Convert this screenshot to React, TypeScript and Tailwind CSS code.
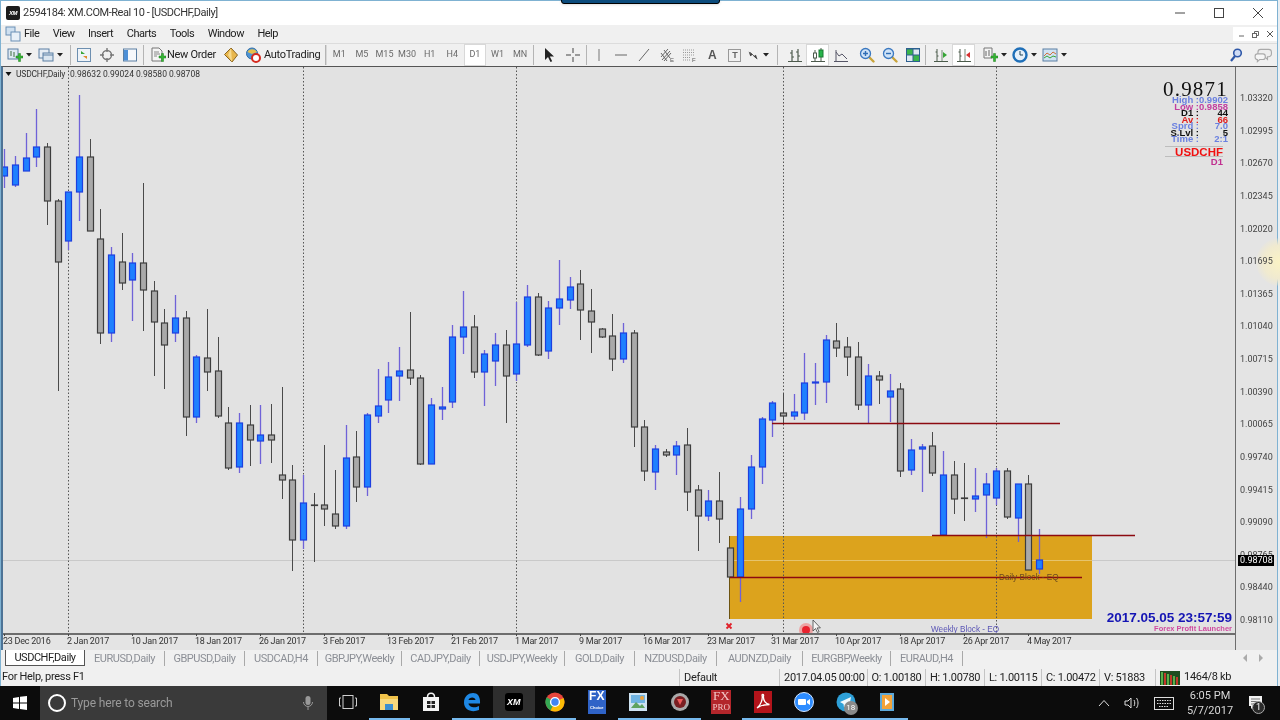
// MT4 chart window
import type { ReactNode } from "react";

type Candle = [string, number, number, number, number];

// type, body top, body bottom, wick top, wick bottom
const candles: Candle[] = [
  ["u",167,176,149,188],["u",165,185,156,187],["u",158,171,133,171],["u",147,157,109,167],["d",147,201,143,225],
  ["d",201,262,199,391],["u",192,241,192,250],["u",157,192,95,221],["d",157,231,139,231],["d",239,333,209,344],
  ["u",255,333,247,342],["d",262,283,233,290],["u",263,280,253,321],["d",263,290,183,331],["d",291,322,281,376],
  ["d",323,345,309,389],["u",318,333,295,342],["d",318,417,311,436],["u",357,417,355,423],["d",358,372,309,391],
  ["d",371,416,337,418],["d",423,468,407,470],["u",423,467,413,473],["d",425,440,405,466],["u",435,441,405,464],
  ["d",435,440,404,463],["d",475,480,387,499],["d",480,540,465,571],["u",503,540,475,549],["d",505,505.5,493,562],
  ["d",505,509,445,526],["d",514,526,470,529],["u",458,526,425,529],["d",457,487,431,502],["u",415,487,413,496],
  ["u",406,416,369,423],["u",377,400,362,413],["u",371,376,347,401],["d",370,378,312,385],["d",378,464,375,465],
  ["u",405,464,398,464],["u",407,409,387,420],["u",337,402,325,408],["u",327,337,291,354],["d",327,372,315,378],
  ["u",354,372,350,406],["u",345,361,333,386],["d",345,376,330,423],["u",344,374,302,381],["u",297,345,285,347],
  ["d",297,355,293,356],["u",308,351,301,359],["u",299,308,260,325],["u",287,300,277,309],["d",284,310,270,340],
  ["d",311,322,289,353],["d",329,337,328,338],["d",336,359,314,371],["u",333,359,323,363],["d",333,427,330,447],
  ["d",427,471,420,481],["u",449,472,445,490],["d",452,455,449,457],["u",446,455,441,475],["d",445,492,428,511],
  ["d",490,516,485,551],["u",501,516,490,521],["d",501,519,472,543],["d",548,577,548,577],["u",509,577,497,602],
  ["u",467,509,455,519],["u",419,467,417,484],["u",403,420,401,437],["d",413,416,393,425],["u",412,416,394,420],
  ["u",383,413,353,420],["u",382,383,363,405],["u",340,382,335,403],["d",341,348,323,357],["d",347,357,337,376],
  ["d",357,405,342,410],["u",376,405,364,423],["d",376,380,371,404],["u",391,397,374,422],["d",389,471,383,477],
  ["u",450,470,439,475],["u",447,449,444,492],["d",446,473,432,476],["u",475,535,451,535],["d",475,499,461,514],
  ["d",498,498.5,463,521],["u",496,499,468,512],["u",484,495,473,538],["u",471,498,468,505],["d",471,517,468,519],
  ["u",484,518,484,542],["d",484,570,475,570],["u",560,569,529,574],
];

const dates = ["23 Dec 2016","2 Jan 2017","10 Jan 2017","18 Jan 2017","26 Jan 2017","3 Feb 2017","13 Feb 2017","21 Feb 2017","1 Mar 2017","9 Mar 2017","16 Mar 2017","23 Mar 2017","31 Mar 2017","10 Apr 2017","18 Apr 2017","26 Apr 2017","4 May 2017"];
const prices = ["1.03320","1.02995","1.02670","1.02345","1.02020","1.01695","1.01365","1.01040","1.00715","1.00390","1.00065","0.99740","0.99415","0.99090","0.98765","0.98440","0.98110"];
const tabs = [
  ["EURUSD,Daily", "w-[80px]"],
  ["GBPUSD,Daily", "w-[80px]"],
  ["USDCAD,H4", "w-[73px]"],
  ["GBPJPY,Weekly", "w-[84px]"],
  ["CADJPY,Daily", "w-[78px]"],
  ["USDJPY,Weekly", "w-[85px]"],
  ["GOLD,Daily", "w-[70px]"],
  ["NZDUSD,Daily", "w-[82px]"],
  ["AUDNZD,Daily", "w-[86px]"],
  ["EURGBP,Weekly", "w-[88px]"],
  ["EURAUD,H4", "w-[72px]"],
];

const info = [
  ["High :", "0.9902", "#6a80e0", 103],
  ["Low :", "0.9858", "#c23fa0", 110],
  ["D1 :", "44", "#111111", 116],
  ["Av :", "66", "#e02020", 123],
  ["Sprd :", "7.0", "#6a80e0", 129],
  ["S.Lvl :", "5", "#111111", 136],
  ["Time :", "2:1", "#6a80e0", 142],
] as const;

const Ico = ({ children, s = 16 }: { children: ReactNode; s?: number }) => (
  <svg width={s} height={s} viewBox="0 0 16 16" className="shrink-0">{children}</svg>
);

const Caret = () => <svg width="6" height="4" viewBox="0 0 6 4" className="ml-[3px] shrink-0"><path d="M0 0h6L3 3.5z" fill="#222" /></svg>;

const Plus = () => <path d="M9 9h2.5V6.5h2V9H16v2h-2.5v3.5h-2V11H9z" fill="#35b534" stroke="#1d7d1d" strokeWidth=".5" />;

const Tb = ({ w, on, children, className = "" }: { w: string; on?: boolean; children: ReactNode; className?: string }) => (
  <div className={`${w} h-[22px] flex items-center justify-center shrink-0 ${on ? "bg-white border border-[#d8d8d8]" : ""} ${className}`}>{children}</div>
);

const Sep = ({ className = "" }: { className?: string }) => <div className={`w-[1px] h-[20px] bg-[#b4b4b4] shrink-0 ${className}`} />;

const Mag = ({ sign }: { sign: string }) => (
  <Ico>
    <path d="M10 10l4.5 4.5" stroke="#c9a43a" strokeWidth="2.4" strokeLinecap="round" />
    <circle cx="6.5" cy="6.5" r="5" fill="#cfe3f7" stroke="#3a78c0" strokeWidth="1.3" />
    <path d={sign} stroke="#2f6db5" strokeWidth="1.4" />
  </Ico>
);

const Bars = ({ mark }: { mark: ReactNode }) => (
  <Ico>
    <path d="M1 14.5h14M4 2v12M2.5 5H4M4 9h1.5" stroke="#4a5a4a" strokeWidth="1" fill="none" />
    {mark}
  </Ico>
);

function Toolbar() {
  return (
    <div className="h-[23px] shrink-0 bg-[#f0f0f0] border-t border-[#dcdcdc] flex items-center pl-[3px] pr-[3px] text-[11px] tracking-[-0.3px] text-[#222]">
      <Tb w="w-[30px]">
        <Ico><rect x="1" y="2" width="10" height="10" fill="#dfe9f2" stroke="#5b7fa3" /><path d="M4 4v5M7 5v5" stroke="#3f6f3f" /><Plus /></Ico><Caret />
      </Tb>
      <Tb w="w-[32px]">
        <Ico><rect x="1" y="2" width="10" height="9" fill="#e6edf4" stroke="#5b7fa3" /><rect x="5" y="6" width="10" height="8" fill="#dbe6f0" stroke="#5b7fa3" /><path d="M5 8h10" stroke="#5b7fa3" /></Ico><Caret />
      </Tb>
      <Sep className="ml-[4px] mr-[1px]" />
      <Tb w="w-[23px]">
        <Ico><rect x="1.5" y="1.5" width="13" height="13" fill="#eef3f8" stroke="#6d8fb0" /><path d="M5 4l4 3H5z" fill="#39a639" /><path d="M11 12L7 9h4z" fill="#e08a2a" /></Ico>
      </Tb>
      <Tb w="w-[23px]">
        <Ico><circle cx="8" cy="8" r="4.5" fill="none" stroke="#777" strokeWidth="1.4" /><path d="M8 1v4M8 11v4M1 8h4M11 8h4" stroke="#777" strokeWidth="1.4" /></Ico>
      </Tb>
      <Tb w="w-[23px]">
        <Ico><rect x="1.5" y="2" width="13" height="12" fill="#f6f8fb" stroke="#5b7fa3" /><rect x="2" y="3" width="4" height="10.5" fill="#4d8fd6" /></Ico>
      </Tb>
      <Sep className="ml-[2px]" />
      <div className="w-[76px] pl-[6px] flex items-center shrink-0 gap-[1px] whitespace-nowrap">
        <Ico><path d="M2 1h7l3 3v10H2z" fill="#f5f5f5" stroke="#777" /><path d="M4 5h5M4 7h6M4 9h3" stroke="#888" /><Plus /></Ico>
        <span>New Order</span>
      </div>
      <Tb w="w-[21px]">
        <Ico><path d="M8 1l6.5 7L9 15 1.5 7.5z" fill="#e8b64c" stroke="#8a6420" /><path d="M8 1L5 8l4 7" fill="#f6d98d" stroke="none" /></Ico>
      </Tb>
      <div className="w-[78px] ml-[2px] pl-[2px] flex items-center gap-[3px] shrink-0 whitespace-nowrap">
        <Ico>
          <circle cx="7" cy="6.5" r="5.5" fill="#4f94d4" stroke="#2f6da8" />
          <path d="M2.5 5C4 2 9 1 12 5L7 7z" fill="#e6c04a" />
          <circle cx="11" cy="11" r="4" fill="#fff" stroke="#d52a1e" strokeWidth="2" />
        </Ico>
        <span>AutoTrading</span>
      </div>
      <Sep className="ml-[4px]" />
      <div className="w-[1px] h-[20px] bg-[#d8d8d8] mr-[1px] shrink-0" />
      {["M1","M5","M15","M30","H1","H4","D1","W1","MN"].map((p) => (
        <Tb key={p} w="w-[22.6px]" on={p === "D1"} className="text-[9px] tracking-normal text-[#6a6a6a]">{p}</Tb>
      ))}
      <Sep className="ml-[2px] mr-[3px]" />
      <Tb w="w-[23px]">
        <Ico><path d="M4 1v12l3-3 2.5 5 1.7-.8L8.8 9.5H13z" fill="#222" /></Ico>
      </Tb>
      <Tb w="w-[23px]" className="ml-[1px]">
        <Ico><path d="M8 1v5M8 10v5M1 8h5M10 8h5" stroke="#444" /></Ico>
      </Tb>
      <Sep className="ml-[2px]" />
      <Tb w="w-[22.7px]"><Ico><path d="M8 2v12" stroke="#777" /></Ico></Tb>
      <Tb w="w-[22.7px]"><Ico><path d="M2 8h12" stroke="#666" /></Ico></Tb>
      <Tb w="w-[22.7px]"><Ico><path d="M3 14L13 2" stroke="#666" /></Ico></Tb>
      <Tb w="w-[22.7px]">
        <Ico><path d="M2 10l7-8M3 13l8-9M5 14l7-8M2 6l6 8M5 3l6 8" stroke="#666" /><text x="11" y="15" fontSize="6" fill="#555" fontFamily="Liberation Sans">E</text></Ico>
      </Tb>
      <Tb w="w-[22.7px]">
        <Ico><path d="M2 3h11M2 5.5h11M2 8h11M2 10.5h8M2 13h8" stroke="#999" strokeDasharray="1 1" /><text x="11" y="15" fontSize="6" fill="#555" fontFamily="Liberation Sans">F</text></Ico>
      </Tb>
      <Tb w="w-[22.7px]" className="font-bold text-[#555] font-['Liberation_Sans'] text-[12px]">A</Tb>
      <Tb w="w-[22.7px]">
        <div className="w-[13px] h-[13px] border border-[#999] flex items-center justify-center text-[9px] leading-none font-bold text-[#666] font-['Liberation_Sans']">T</div>
      </Tb>
      <Tb w="w-[24px]">
        <Ico s={13}><path d="M2 3l5 4-3 2zM13 13L8 9l3-2z" fill="#444" /><path d="M4 4l8 8" stroke="#444" /></Ico><Caret />
      </Tb>
      <Sep className="ml-[7px] mr-[5px]" />
      <Tb w="w-[23px]">
        <Ico><path d="M1 14.5h14M5 3v11M11 2v12M3 6h2M5 10h2M9 5h2M11 9h2" stroke="#4d5a4d" strokeWidth="1.2" fill="none" /></Ico>
      </Tb>
      <Tb w="w-[23px]" on>
        <Ico><path d="M1 14.5h14M5 3v11M11 1v13" stroke="#4d5a4d" /><rect x="3.5" y="6" width="3" height="5" fill="#fff" stroke="#4d5a4d" /><rect x="9" y="3" width="4" height="7" fill="#27b34a" stroke="#1a7a33" /></Ico>
      </Tb>
      <Tb w="w-[23px]">
        <Ico><path d="M1 14.5h14M3 14V3M3 5l3 4 3-2 5 5" stroke="#556" fill="none" /></Ico>
      </Tb>
      <div className="w-[3px] shrink-0" />
      <Tb w="w-[23px]"><Mag sign="M4 6.5h5M6.5 4v5" /></Tb>
      <Tb w="w-[23px]"><Mag sign="M4 6.5h5" /></Tb>
      <Tb w="w-[23px]">
        <Ico>
          <rect x="1" y="1" width="14" height="14" fill="#2c5f8f" />
          <rect x="2" y="2.5" width="5.5" height="5" fill="#39b54a" /><rect x="8.5" y="2.5" width="5.5" height="5" fill="#dfe9f2" />
          <rect x="2" y="8.5" width="5.5" height="5.5" fill="#dfe9f2" /><rect x="8.5" y="8.5" width="5.5" height="5.5" fill="#39b54a" />
        </Ico>
      </Tb>
      <Sep className="ml-[1px] mr-[3px]" />
      <Tb w="w-[23px]">
        <Bars mark={<><path d="M9 3v11" stroke="#7a8a7a" /><path d="M10 5l4 3-4 3z" fill="#35a535" /></>} />
      </Tb>
      <Tb w="w-[23px]" on>
        <Bars mark={<><path d="M9 2v12" stroke="#7a8a7a" /><path d="M14 5l-4 3 4 3z" fill="#d63030" /></>} />
      </Tb>
      <div className="w-[4px] shrink-0" />
      <Tb w="w-[30px]">
        <Ico><path d="M2 1h8v10H2z" fill="#f4f4f4" stroke="#777" /><path d="M4 4v5M7 3v6" stroke="#666" /><Plus /></Ico><Caret />
      </Tb>
      <Tb w="w-[30px]">
        <Ico><circle cx="8" cy="8" r="6.5" fill="#e6f0fa" stroke="#1f6fb8" strokeWidth="2.4" /><path d="M8 4v4h3" stroke="#245" fill="none" /></Ico><Caret />
      </Tb>
      <Tb w="w-[30px]">
        <Ico><rect x="1" y="2" width="14" height="12" fill="#cfe2f3" stroke="#5b7fa3" /><path d="M2 9l3-3 3 2 3-3 3 2" stroke="#d0703a" fill="none" /><path d="M2 11l3-2 3 2 3-2 3 1" stroke="#39a639" fill="none" /></Ico><Caret />
      </Tb>
      <div className="flex-1" />
      <Tb w="w-[23px]">
        <Ico><circle cx="9.5" cy="6" r="3.8" fill="#cfdcf5" stroke="#2f58a8" strokeWidth="1.6" /><path d="M7 9l-4 5" stroke="#2f58a8" strokeWidth="2.2" /></Ico>
      </Tb>
      <Tb w="w-[23px]" className="ml-[4px]">
        <Ico s={18}><path d="M6 3h7a2.5 2.5 0 012.5 2.5V7A2.5 2.5 0 0113 9.5h-1V12l-2.5-2.5H6A2.5 2.5 0 013.5 7V5.5A2.5 2.5 0 016 3z" fill="#eee" stroke="#aaa" /><path d="M3 7h5a2 2 0 012 2v1a2 2 0 01-2 2H5l-2 2v-2a2 2 0 01-2-2V9a2 2 0 012-2z" fill="#f6f6f6" stroke="#aaa" /></Ico>
      </Tb>
    </div>
  );
}

function Plot() {
  return (
    <svg width="1232" height="566" viewBox="3 67 1232 566" className="block bg-[#e2e2e2]">
      <line x1="3" y1="560.5" x2="1235" y2="560.5" stroke="#c9c9c9" />
      <rect x="729.5" y="536" width="362.5" height="83" fill="#dca31d" />
      <line x1="729.5" y1="536" x2="729.5" y2="619" stroke="#6d5310" />
      <line x1="729.5" y1="560.5" x2="1092" y2="560.5" stroke="#e6c46c" />
      {[68, 303, 516, 783, 996].map((x) => (
        <line key={x} x1={x + 0.5} y1="67" x2={x + 0.5} y2="633" stroke="#555" strokeDasharray="1.5 2" />
      ))}
      {candles.map(([t, top, bot, wt, wb], i) => {
        const x = Math.round(4.33 + 10.667 * i);
        const up = t === "u";
        return (
          <g key={i}>
            <line x1={x + 0.5} y1={wt} x2={x + 0.5} y2={wb} stroke={up ? "#6f62d8" : "#4a4a4a"} strokeWidth={up ? 1.3 : 1} />
            <rect x={x - 2.5} y={top} width="6" height={bot - top} fill={up ? "#1f80ff" : "#a9a9a9"} stroke={up ? "#1d3fe0" : "#3d3d3d"} strokeWidth="1.2" />
          </g>
        );
      })}
      <line x1="772" y1="423.5" x2="1060" y2="423.5" stroke="#8c0a10" strokeWidth="1.4" />
      <line x1="932" y1="535.5" x2="1135" y2="535.5" stroke="#8c0a10" strokeWidth="1.4" />
      <line x1="730" y1="577.5" x2="1082" y2="577.5" stroke="#8c0a10" strokeWidth="1.4" />
      <path d="M726.5 623.5l5 5M731.5 623.5l-5 5" stroke="#e0202a" strokeWidth="1.8" />
      <g fontFamily="Liberation Sans, sans-serif">
        <text x="999" y="580" fontSize="8.2" fill="#6a4a20">Daily Block - EQ</text>
        <text x="931" y="632" fontSize="8.2" fill="#5a55b5">Weekly Block - EQ</text>
        <text x="1232" y="622" textAnchor="end" fontSize="13.5" fontWeight="700" fill="#1414b4">2017.05.05 23:57:59</text>
        <text x="1232" y="631" textAnchor="end" fontSize="7.5" fontWeight="700" fill="#d04aa0">Forex Profit Launcher</text>
        <text x="1163" y="96" fontSize="21" letterSpacing="1.2" fill="#111" fontFamily="Liberation Serif, serif">0.9871</text>
        {info.map(([label, val, col, y]) => (
          <g key={label} fontSize="9.5" fontWeight="700" fill={col}>
            <text x="1199" y={y} textAnchor="end">{label}</text>
            <text x="1228" y={y} textAnchor="end">{val}</text>
          </g>
        ))}
        <line x1="1165" y1="146.5" x2="1223" y2="146.5" stroke="#bdbdbd" />
        <line x1="1165" y1="156.5" x2="1223" y2="156.5" stroke="#bdbdbd" />
        <text x="1223" y="156" textAnchor="end" fontSize="11.5" fontWeight="700" fill="#f01010">USDCHF</text>
        <text x="1223" y="165" textAnchor="end" fontSize="9.5" fontWeight="700" fill="#c02f8f">D1</text>
      </g>
      <path d="M5.5 72h6l-3 4z" fill="#111" />
      <text x="16" y="77" fontSize="8.5" letterSpacing="-.2" fill="#333" fontFamily="Roboto, sans-serif">USDCHF,Daily</text>
      <text x="70" y="77" fontSize="8.5" fill="#333" fontFamily="Roboto, sans-serif">0.98632 0.99024 0.98580 0.98708</text>
      <circle cx="806" cy="630" r="7" fill="#f28a8a" opacity=".7" />
      <circle cx="806" cy="630" r="4" fill="#e8222e" />
      <path d="M813 620v11l2.5-2.5 2 4 1.6-.8-2-3.8h3.3z" fill="#f4f4f4" stroke="#444" strokeWidth=".8" />
    </svg>
  );
}

const Taskbar = ({ on, bg, children }: { on?: boolean; bg?: boolean; children: ReactNode }) => (
  <div className={`w-[41.5px] h-full flex items-center justify-center shrink-0 border-b-2 ${on ? "border-[#76b9ed]" : "border-transparent"} ${bg ? "bg-[#2e2e2e]" : ""}`}>{children}</div>
);

export default function App() {
  return (
    <div className="relative w-[1280px] h-[720px] overflow-hidden flex flex-col bg-white font-['Roboto',sans-serif] text-[#222] blur-[0.35px]">
      <div className="absolute left-[561px] top-[-3px] w-[159px] h-[7px] bg-[#0b4b7c] border border-black rounded-b-[3px] shadow" />
      <div className="absolute right-0 top-[238px] w-[24px] h-[48px] rounded-l-full bg-[radial-gradient(circle_at_right,#fbf3c4,#f0ead0_50%,transparent_75%)]" />

      <div className="h-[686px] shrink-0 pr-[2px] bg-[#e9eef2]">
        <div className="h-full flex flex-col border-l border-r border-t border-b border-[#7fb2d2]">
          {/* title */}
          <div className="h-[24px] shrink-0 bg-white flex items-center pl-[5px] text-[11px] tracking-[-0.45px]">
            <div className="w-[14px] h-[14px] bg-[#1c1c1c] rounded-[2px] text-[6px] leading-[14px] text-center font-bold italic text-white font-['Liberation_Sans'] shrink-0">XM</div>
            <span className="ml-[3px] text-[#333]">2594184: XM.COM-Real 10 - [USDCHF,Daily]</span>
            <div className="ml-auto flex items-center">
              <div className="w-[39px] flex justify-center"><svg width="10" height="10" viewBox="0 0 10 10"><path d="M0 5h10" stroke="#444" /></svg></div>
              <div className="w-[39px] flex justify-center"><svg width="10" height="10" viewBox="0 0 10 10"><rect x=".5" y=".5" width="9" height="9" fill="none" stroke="#444" /></svg></div>
              <div className="w-[39px] flex justify-center"><svg width="10" height="10" viewBox="0 0 10 10"><path d="M0 0l10 10M10 0L0 10" stroke="#444" /></svg></div>
            </div>
          </div>

          {/* menu */}
          <div className="h-[18px] shrink-0 bg-[#f0f0f0] flex items-center pl-[4px] text-[11px] tracking-[-0.5px]">
            <Ico>
              <rect x="1" y="1" width="9" height="8" fill="#cfe0f0" stroke="#6a8fb5" />
              <rect x="6" y="6" width="9" height="9" fill="#e8f0f8" stroke="#6a8fb5" />
            </Ico>
            <div className="flex gap-[13.5px] ml-[3px]">
              {["File", "View", "Insert", "Charts", "Tools", "Window", "Help"].map((m) => <span key={m}>{m}</span>)}
            </div>
            <div className="ml-auto h-[14px] w-[44px] bg-white flex items-center justify-around text-[#666] pl-[2px]">
              <svg width="6" height="6" viewBox="0 0 6 6"><path d="M0 5h5" stroke="#666" /></svg>
              <svg width="7" height="7" viewBox="0 0 7 7" fill="none" stroke="#666"><rect x=".5" y="2.5" width="4" height="4" /><path d="M2.5 2.5V.5h4v4H4.5" /></svg>
              <svg width="6" height="6" viewBox="0 0 6 6"><path d="M0 0l6 6M6 0L0 6" stroke="#555" /></svg>
            </div>
          </div>

          <Toolbar />

          {/* chart */}
          <div className="h-[584px] shrink-0 flex bg-[#e4e4e4] border-t border-[#555] border-l-[2px] border-l-[#4d7396]">
            <div className="w-[1232px] shrink-0 flex flex-col">
              <div className="border-r border-b-2 border-[#6d6d6d] w-[1233px]"><Plot /></div>
              <div className="flex text-[9px] leading-[9px] tracking-[-0.25px] text-[#333] mt-[-1px]">
                {dates.map((d) => (
                  <div key={d} className="w-[64px] shrink-0 whitespace-nowrap">
                    <div className="w-[1px] h-[2px] bg-[#444] ml-[1px]" />
                    <div className="mt-[1px]">{d}</div>
                  </div>
                ))}
              </div>
            </div>
            <div className="relative flex-1 pt-[15px] pl-[4px] text-[9px] text-[#444] border-l border-[#6d6d6d]">
              {prices.map((p) => <div key={p} className="h-[32.64px] leading-[32px]">{p}</div>)}
              <div className="absolute left-[2px] top-[488px] w-[36px] h-[11px] bg-black text-white leading-[11px] pl-[2px]">0.98708</div>
            </div>
          </div>

          {/* tabs */}
          <div className="h-[18px] shrink-0 bg-[#f0f0f0] flex items-start pl-[4px] text-[11px] tracking-[-0.45px] text-[#8c8f96]">
            <div className="w-[80px] h-[16px] bg-white border border-[#555] border-t-0 text-[#222] text-center leading-[15px]">USDCHF,Daily</div>
            {tabs.map(([t, w]) => (
              <div key={t} className={`${w} shrink-0 h-[15px] mt-[1px] leading-[15px] text-center border-r border-[#a9a9a9] whitespace-nowrap`}>{t}</div>
            ))}
            <div className="ml-auto mr-[14px] mt-[4px] flex gap-[10px]">
              <svg width="5" height="8" viewBox="0 0 5 8"><path d="M4 0L0 4l4 4z" fill="#aaa" /></svg>
              <svg width="5" height="8" viewBox="0 0 5 8"><path d="M1 0l4 4-4 4z" fill="#aaa" /></svg>
            </div>
          </div>

          {/* status */}
          <div className="flex-1 bg-[#f0f0f0] flex items-center pl-[1px] pt-[1px] text-[11px] tracking-[-0.3px]">
            <div className="w-[677px] shrink-0">For Help, press F1</div>
            {[["w-[100px]","Default"],["w-[87.5px]","2017.04.05 00:00"],["w-[58.5px]","O: 1.00180"],["w-[59px]","H: 1.00780"],["w-[57px]","L: 1.00115"],["w-[58px]","C: 1.00472"],["w-[56px]","V: 51883"]].map(([w, t]) => (
              <div key={t} className={`${w} h-[17px] leading-[17px] pl-[4px] border-l border-[#c4c4c4] shrink-0 whitespace-nowrap`}>{t}</div>
            ))}
            <div className="h-[17px] pl-[4px] flex items-center gap-[4px] border-l border-[#c4c4c4] whitespace-nowrap">
              <svg width="20" height="14" viewBox="0 0 20 14">
                <rect width="20" height="14" fill="#1f4d1f" />
                {[1, 4, 7, 10, 13, 16].map((x, i) => <rect key={x} x={x} y={1 + i} width="2" height={13 - i} fill={i % 2 ? "#c23a2a" : "#58b04a"} />)}
              </svg>
              <span>1464/8 kb</span>
            </div>
          </div>
        </div>
      </div>

      {/* windows taskbar */}
      <div className="flex-1 bg-[#0c0c0c] flex items-center text-[#d8d8d8]">
        <div className="w-[40px] flex justify-center">
          <svg width="14" height="14" viewBox="0 0 14 14"><path d="M0 2l6-1v5.5H0zM7 .8L14 0v6.5H7zM0 7.5h6V13l-6-1zM7 7.5h7V14l-7-1z" fill="#fff" /></svg>
        </div>
        <div className="w-[287px] h-full bg-[#3a3a3a] flex items-center pl-[8px] text-[#9a9a9a] text-[12px] tracking-[-0.15px]">
          <div className="w-[18px] h-[18px] rounded-full border-[2px] border-white shrink-0" />
          <span className="ml-[5px]">Type here to search</span>
          <svg width="12" height="16" viewBox="0 0 12 16" className="ml-auto mr-[13px]"><rect x="3.5" y="1" width="5" height="9" rx="2.5" fill="#999" /><path d="M1.5 7a4.5 4.5 0 009 0M6 12v3" stroke="#999" fill="none" /></svg>
        </div>
        <Taskbar>
          <svg width="18" height="14" viewBox="0 0 18 14" fill="none" stroke="#cfcfcf"><rect x="4" y=".5" width="10" height="13" /><path d="M2 3H.5v8H2M16 3h1.5v8H16" /></svg>
        </Taskbar>
        <Taskbar on>
          <svg width="20" height="18" viewBox="0 0 20 18"><path d="M1 1h7l2 2h9v14H1z" fill="#f0c24a" /><rect x="1" y="6" width="18" height="11" fill="#f8d97c" /><rect x="6" y="11" width="8" height="6" fill="#3c8fd0" /></svg>
        </Taskbar>
        <Taskbar>
          <svg width="18" height="20" viewBox="0 0 18 20"><path d="M1 5h16v14H1z" fill="#f4f4f4" /><path d="M5.5 5C5.5 0 12.5 0 12.5 5" fill="none" stroke="#f4f4f4" strokeWidth="1.5" /><path d="M5 9h3.5v3H5zM9.5 9H13v3H9.5zM5 13h3.5v3H5zM9.5 13H13v3H9.5z" fill="#222" /></svg>
        </Taskbar>
        <Taskbar on>
          <svg width="20" height="20" viewBox="0 0 20 20"><path d="M18 11.5H6.5c.2 3 5.5 5.5 10.5 2.5v4c-7 3-15 0-15-7.5C2 4 7 1 11 1c5 0 7.5 4 7 10.5zM6.5 8h7c0-3.5-6.5-3.5-7 0z" fill="#1e88e5" /></svg>
        </Taskbar>
        <Taskbar on bg>
          <div className="w-[18px] h-[18px] rounded-[3px] bg-black text-white text-[9px] leading-[18px] text-center italic font-bold font-['Liberation_Sans']">XM</div>
        </Taskbar>
        <Taskbar on>
          <svg width="20" height="20" viewBox="0 0 20 20">
            <circle cx="10" cy="10" r="9.5" fill="#e8453c" />
            <path d="M10 10L1.7 5.2A9.5 9.5 0 005.5 18.4z" fill="#34a853" />
            <path d="M10 10l-4.5 8.4A9.5 9.5 0 0019.5 10 9.5 9.5 0 0018.5 6z" fill="#fbbc05" />
            <circle cx="10" cy="10" r="4.4" fill="#4285f4" stroke="#fff" strokeWidth="1.4" />
          </svg>
        </Taskbar>
        <Taskbar>
          <div className="w-[18px] h-[24px] bg-[#2f63c7] text-white text-[12px] leading-[13px] text-center font-bold font-['Liberation_Sans']">FX<div className="text-[4px] leading-[5px] mt-[2px]">Choice</div></div>
        </Taskbar>
        <Taskbar on>
          <svg width="20" height="20" viewBox="0 0 20 20"><rect x="1" y="1" width="18" height="18" fill="#cfe3f2" /><rect x="3" y="3" width="14" height="8" fill="#6fb3e2" /><path d="M3 16l5-6 4 4 2-2 3 4z" fill="#5fa35f" /><circle cx="14" cy="6" r="2" fill="#f0a23a" /></svg>
        </Taskbar>
        <Taskbar on>
          <svg width="20" height="20" viewBox="0 0 20 20"><circle cx="10" cy="10" r="9" fill="#a9a9a9" /><circle cx="10" cy="10" r="6" fill="#7a1f22" /><path d="M7 7h6l-3 6z" fill="#f05a5a" /></svg>
        </Taskbar>
        <Taskbar>
          <div className="w-[20px] h-[24px] bg-[#b3262b] text-[#f3c7c7] text-[13px] leading-[12px] text-center font-['Liberation_Serif']">FX<div className="text-[9px] leading-[10px]">PRO</div></div>
        </Taskbar>
        <Taskbar on>
          <svg width="18" height="22" viewBox="0 0 18 22"><rect width="18" height="22" fill="#b3141b" /><path d="M3 17c4-3 6-9 5-13 0-1 2-1 1.5 1-.5 4 2 8 6 8.5-4 0-9 1-12.5 3.5z" fill="none" stroke="#fff" strokeWidth="1.3" /></svg>
        </Taskbar>
        <Taskbar on>
          <svg width="20" height="20" viewBox="0 0 20 20"><circle cx="10" cy="10" r="9.5" fill="#2d8cff" stroke="#d6e8ff" /><rect x="4" y="7" width="8" height="6" rx="1" fill="#fff" /><path d="M13 9l3-2v6l-3-2z" fill="#fff" /></svg>
        </Taskbar>
        <Taskbar on>
          <div className="relative w-[20px] h-[20px]">
            <svg width="20" height="20" viewBox="0 0 20 20"><circle cx="10" cy="10" r="9.5" fill="#2ea0d8" /><path d="M4 10l11-5-2 11-3-2.5-2 2-.5-3.5z" fill="#f2f8fc" /></svg>
            <div className="absolute left-[8px] top-[9px] w-[14px] h-[14px] rounded-full bg-[#8a8a8a] text-white text-[8px] leading-[14px] text-center">18</div>
          </div>
        </Taskbar>
        <Taskbar on>
          <svg width="16" height="20" viewBox="0 0 16 20"><path d="M1 1h14v18H1z" fill="#5da8d8" /><rect x="3" y="3" width="10" height="14" fill="#f2a33a" /><path d="M6 6l5 4-5 4z" fill="#fff" /></svg>
        </Taskbar>
        <div className="ml-auto flex items-center pr-[17px]">
          <svg width="12" height="8" viewBox="0 0 12 8" fill="none" stroke="#ddd"><path d="M1 7l5-5.5L11 7" /></svg>
          <svg width="16" height="14" viewBox="0 0 16 14" className="ml-[14px]"><path d="M1 5h3l3-3v10L4 9H1z" fill="none" stroke="#ddd" /><path d="M10 4c1 1.5 1 4.5 0 6M12.5 2c2 3 2 7 0 10" stroke="#ddd" fill="none" /></svg>
          <svg width="20" height="13" viewBox="0 0 20 13" className="ml-[14px]" fill="none" stroke="#ddd"><rect x=".5" y=".5" width="19" height="12" /><path d="M3 3.5h14M3 6.5h14M5 9.5h10" strokeDasharray="1.5 1" /></svg>
          <div className="w-[70px] text-center text-[11px] leading-[15px] ml-[1px]">
            <div>6:05 PM</div>
            <div>5/7/2017</div>
          </div>
          <div className="relative w-[14px] h-[14px] ml-[4px]">
            <svg width="14" height="14" viewBox="0 0 14 14"><path d="M0 0h13v10H5l-3 3v-3H0z" fill="#f2f2f2" /><path d="M2 3h9M2 5.5h9M2 8h6" stroke="#777" /></svg>
            <div className="absolute left-[3px] top-[5px] w-[13px] h-[13px] rounded-full bg-[#2a2a2a] border border-[#aaa] text-[9px] leading-[11px] text-center text-white">1</div>
          </div>
        </div>
      </div>
    </div>
  );
}
